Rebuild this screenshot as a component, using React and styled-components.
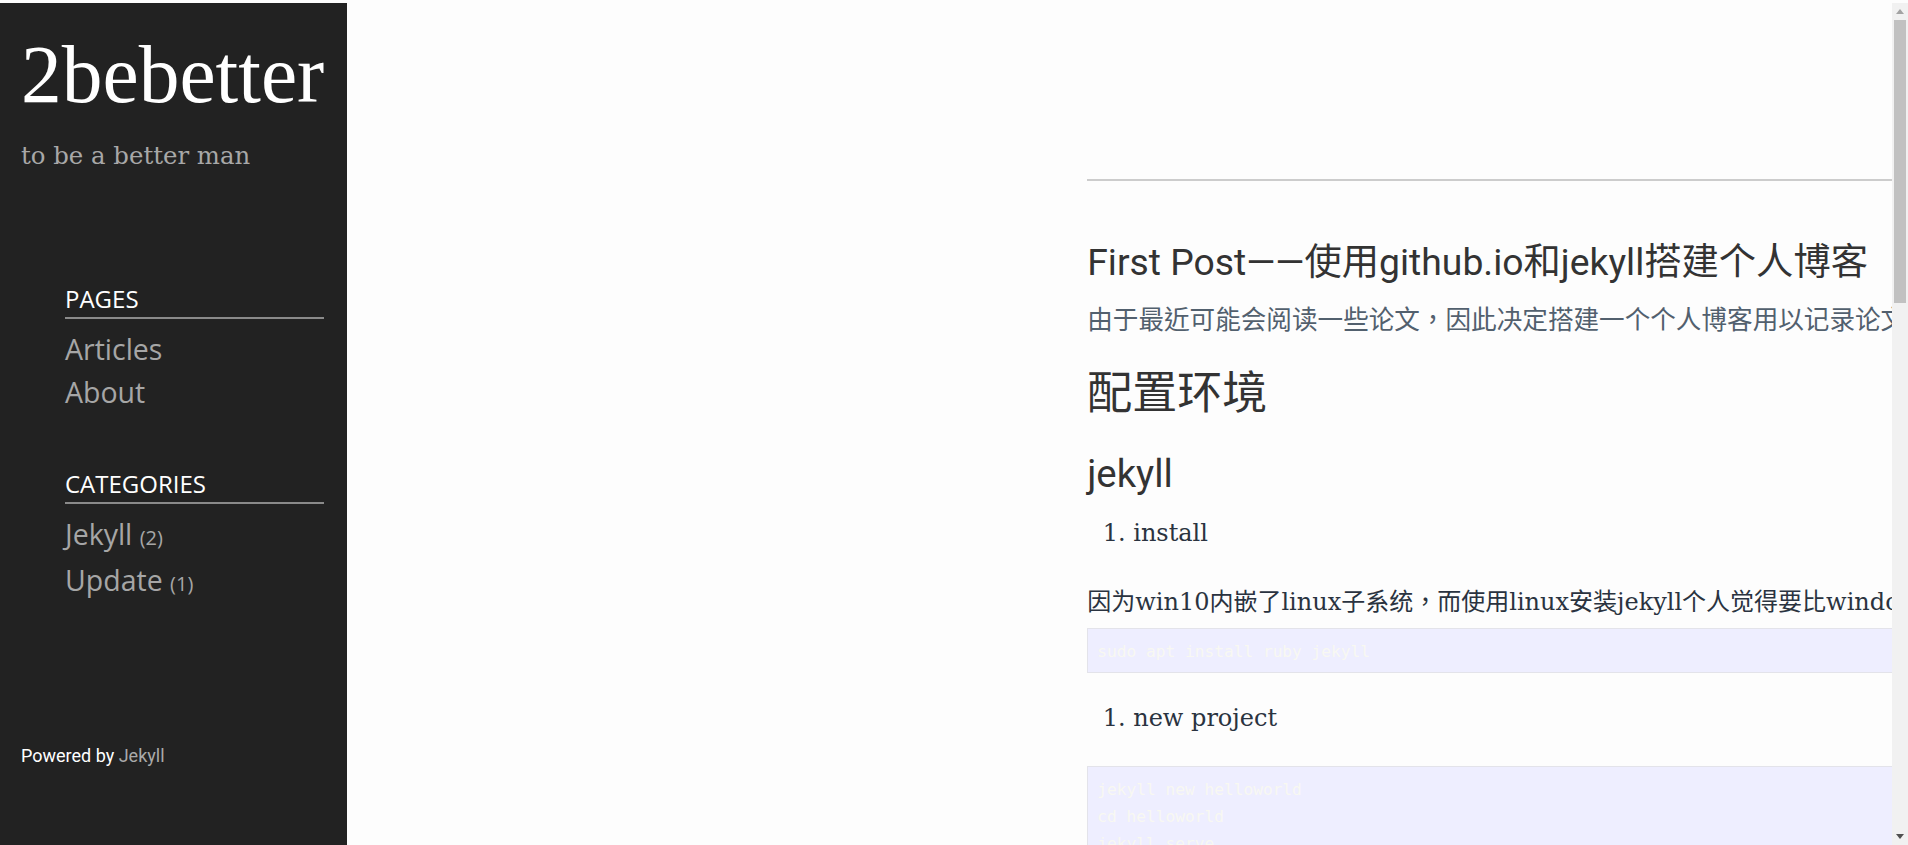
import React from 'react';
import styled, { createGlobalStyle } from 'styled-components';

const GlobalStyle = createGlobalStyle`
  html, body { margin: 0; padding: 0; background: #fdfdfd; overflow: hidden; }
  body { font-family: "DejaVu Serif", "Noto Sans CJK TC", serif; color: #333; }
`;

const Page = styled.div`
  display: flex;
  height: 100vh;
  box-sizing: border-box;
  padding-top: 3px;
  overflow: hidden;
  background: #fdfdfd;
`;

const Sidebar = styled.aside`
  flex: 0 0 347px;
  box-sizing: border-box;
  background: #222222;
  padding: 32px 23px 77px 21px;
  display: flex;
  flex-direction: column;
`;

const SiteTitle = styled.div`
  font-family: "Liberation Serif", serif;
  font-size: 81.5px;
  line-height: 80px;
  color: #ffffff;
`;

const Tagline = styled.div`
  margin-top: 26px;
  font-family: "DejaVu Serif", serif;
  font-size: 24.4px;
  line-height: 30px;
  color: #a8a8a8;
`;

const Nav = styled.nav`
  margin: 113px 0 0 44px;
  display: flex;
  flex-direction: column;
`;

const NavSection = styled.section`
  & + & { margin-top: 55px; }
`;

const NavHeading = styled.div`
  font-family: "Open Sans", sans-serif;
  font-size: 24px;
  line-height: 30px;
  color: #ffffff;
  text-transform: uppercase;
  padding-bottom: 3px;
  border-bottom: 2px solid #8a8a8a;
`;

const NavList = styled.ul`
  list-style: none;
  margin: 9px 0 0;
  padding: 0;
`;

const NavItem = styled.li`
  font-family: "Open Sans", sans-serif;
  font-size: 28.5px;
  line-height: 43px;
  color: #a6a6a6;
`;

const Count = styled.span`
  font-size: 20px;
  color: #a6a6a6;
`;

const Footer = styled.div`
  margin-top: auto;
  font-family: Roboto, sans-serif;
  font-size: 18px;
  line-height: 24px;
  color: #ffffff;
`;

const FooterLink = styled.span`
  color: #aaaaaa;
`;

const Main = styled.main`
  flex: 1;
  min-width: 0;
  overflow: hidden;
  padding: 176px 0 0 740px;
`;

const Article = styled.article`
  width: 1200px;
  display: flex;
  flex-direction: column;
`;

const Rule = styled.hr`
  margin: 0;
  height: 0;
  border: 0;
  border-top: 2px solid #cccccc;
`;

const PostTitle = styled.h1`
  margin: 59px 0 0;
  font-family: Roboto, "Noto Sans CJK TC", sans-serif;
  font-weight: 400;
  font-size: 37.3px;
  line-height: 44px;
  color: #333333;
  white-space: nowrap;
`;

const Excerpt = styled.p`
  margin: 15px 0 0;
  font-family: "Noto Sans CJK TC", sans-serif;
  font-size: 25.6px;
  line-height: 38.4px;
  color: #52606e;
  white-space: nowrap;
`;

const Heading = styled.h2`
  margin: ${p => p.$gap}px 0 0;
  font-family: Roboto, "Noto Sans CJK TC", sans-serif;
  font-weight: 400;
  font-size: ${p => p.$size}px;
  line-height: 1.2;
  color: #333333;
`;

const List = styled.ol`
  margin: ${p => p.$gap}px 0 0;
  padding-left: 46px;
`;

const ListItem = styled.li`
  font-size: 24px;
  line-height: 33px;
  color: #2a3340;
`;

const Para = styled.p`
  margin: ${p => p.$gap}px 0 0;
  font-size: 24px;
  line-height: 33px;
  color: #2a3340;
  white-space: nowrap;
`;

const Code = styled.pre`
  margin: ${p => p.$gap}px 0 0;
  padding: 9px 9px 7px;
  background: #eeeeff;
  border: 1px solid #e3e3ea;
  font-family: "DejaVu Sans Mono", monospace;
  font-size: 16.2px;
  line-height: 27px;
  color: #f8f8f2;
`;

const ScrollBar = styled.div`
  flex: 0 0 16px;
  display: flex;
  flex-direction: column;
  background: #f1f1f1;
`;

const ScrollArrow = styled.div`
  flex: 0 0 17px;
  display: flex;
  align-items: center;
  justify-content: center;
`;

const ScrollTrack = styled.div`
  flex: 1;
  display: flex;
  flex-direction: column;
`;

const ScrollThumb = styled.div`
  height: 283px;
  margin: 0 2px;
  background: #c1c1c1;
`;

const Arrow = ({ up, color }) => (
  <svg width="8" height="5" viewBox="0 0 8 5">
    <path d={up ? 'M0 5 L4 0 L8 5 Z' : 'M0 0 L8 0 L4 5 Z'} fill={color} />
  </svg>
);

export default function App() {
  return (
    <>
      <GlobalStyle />
      <Page>
        <Sidebar>
          <SiteTitle>2bebetter</SiteTitle>
          <Tagline>to be a better man</Tagline>
          <Nav>
            <NavSection>
              <NavHeading>Pages</NavHeading>
              <NavList>
                <NavItem>Articles</NavItem>
                <NavItem>About</NavItem>
              </NavList>
            </NavSection>
            <NavSection>
              <NavHeading>Categories</NavHeading>
              <NavList>
                <NavItem>Jekyll <Count>(2)</Count></NavItem>
                <NavItem>Update <Count>(1)</Count></NavItem>
              </NavList>
            </NavSection>
          </Nav>
          <Footer>Powered by <FooterLink>Jekyll</FooterLink></Footer>
        </Sidebar>
        <Main>
          <Article>
            <Rule />
            <PostTitle>First Post——使用github.io和jekyll搭建个人博客</PostTitle>
            <Excerpt>由于最近可能会阅读一些论文，因此决定搭建一个个人博客用以记录论文笔记。</Excerpt>
            <Heading $size={45} $gap={30}>配置环境</Heading>
            <Heading $size={38.3} $gap={30}>jekyll</Heading>
            <List $gap={20}><ListItem>install</ListItem></List>
            <Para $gap={36}>因为win10内嵌了linux子系统，而使用linux安装jekyll个人觉得要比windows方便。</Para>
            <Code $gap={9}>sudo apt install ruby jekyll</Code>
            <List $gap={29}><ListItem>new project</ListItem></List>
            <Code $gap={31}>{`jekyll new helloworld
cd helloworld
jekyll serve`}</Code>
          </Article>
        </Main>
        <ScrollBar>
          <ScrollArrow><Arrow up color="#a3a3a3" /></ScrollArrow>
          <ScrollTrack><ScrollThumb /></ScrollTrack>
          <ScrollArrow><Arrow color="#505050" /></ScrollArrow>
        </ScrollBar>
      </Page>
    </>
  );
}
